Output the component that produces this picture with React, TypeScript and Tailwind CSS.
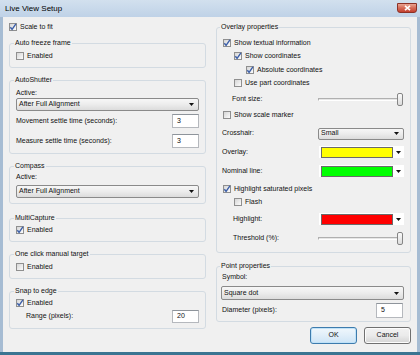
import React from 'react';

const Check = ({ checked }: { checked?: boolean }) => (
  <span className="w-[8px] h-[8px] shrink-0 border border-[#8f8f8f] bg-linear-to-br from-[#d6d6d6] to-[#fcfcfc] flex items-center justify-center">
    {checked && (
      <svg width="8" height="8" viewBox="0 0 8 8" className="overflow-visible">
        <path d="M1.3 4.2 L3.1 6.3 L6.9 0.9" fill="none" stroke="#3b5ea8" strokeWidth="1.4" />
      </svg>
    )}
  </span>
);

const CheckRow = ({ label, checked, className = '' }: { label: string; checked?: boolean; className?: string }) => (
  <div className={`flex items-center h-[12px] gap-[3px] ${className}`}>
    <Check checked={checked} />
    <span>{label}</span>
  </div>
);

const Arrow = () => (
  <svg width="5" height="3" viewBox="0 0 5 3" className="shrink-0">
    <polygon points="0,0 5,0 2.5,3" fill="#111" />
  </svg>
);

const Combo = ({ text, className = '' }: { text: string; className?: string }) => (
  <div
    className={`flex items-center justify-between border border-[#8a8a8a] rounded-[2px] bg-linear-to-b from-[#f7f7f7] via-[#ececec] to-[#dcdcdc] pl-[2px] pr-[4px] ${className}`}
  >
    <span>{text}</span>
    <Arrow />
  </div>
);

const ColorCombo = ({ color }: { color: string }) => (
  <div className="flex items-center w-[85px] h-[12px] bg-white pl-[2px] pr-[3px]">
    <div className={`w-[72px] h-[11px] border border-[#6a6a6a] ${color}`} />
    <div className="flex-1 flex justify-end">
      <Arrow />
    </div>
  </div>
);

const NumBox = ({ value, className = '' }: { value: string; className?: string }) => (
  <div
    className={`w-[27px] bg-white border border-[#b5b8bd] border-t-[#8e949b] flex items-center pl-[4px] ${className}`}
  >
    {value}
  </div>
);

const Slider = () => (
  <div className="flex items-center w-[85px] h-[14px]">
    <div className="flex-1 h-[3px] border border-[#b0b0b0] border-b-white bg-[#e6e6e6]" />
    <div className="w-[6px] h-[13px] -ml-[1px] rounded-[2px] border border-[#858585] bg-linear-to-b from-[#fafafa] to-[#dcdcdc]" />
  </div>
);

const Group = ({ title, className = '', children }: { title: string; className?: string; children: React.ReactNode }) => (
  <fieldset className={`border border-[#d3dbe2] rounded-[3px] ${className}`}>
    <legend className="-ml-[2px] px-[1px] leading-[10px]">{title}</legend>
    {children}
  </fieldset>
);

export default function App() {
  return (
    <div className="w-[420px] h-[355px] flex flex-col bg-[#a6bcd3] text-[7px] text-[#111] font-['Liberation_Sans',Arial,sans-serif] overflow-hidden">
      {/* Title bar */}
      <div className="h-[17px] shrink-0 flex items-start justify-between pl-[5px] pr-[3px] bg-linear-to-b from-[#d2e0ee] to-[#bfd2e7]">
        <span className="text-[8px] leading-[17px] text-black">Live View Setup</span>
        <div className="mt-[3px] w-[20px] h-[10px] rounded-b-[3px] border border-[#8c3126] bg-linear-to-b from-[#e9a493] via-[#d56a57] to-[#c33f2f] flex items-center justify-center">
          <svg width="7" height="6" viewBox="0 0 7 6">
            <path d="M1 0.8 L6 5.2 M6 0.8 L1 5.2" stroke="#fff" strokeWidth="1.6" />
          </svg>
        </div>
      </div>

      {/* Client area */}
      <div className="h-[335px] mx-[3px] bg-[#f0f0f0] flex gap-[10px] px-[6px]">
        {/* Left column */}
        <div className="w-[197px] flex flex-col">
          <CheckRow label="Scale to fit" checked className="mt-[4px]" />

          <Group title="Auto freeze frame" className="mt-[5px] px-[6px] pb-[5px]">
            <CheckRow label="Enabled" className="mt-[2px]" />
          </Group>

          <Group title="AutoShutter" className="mt-[7px] px-[6px] pb-[5px]">
            <div className="h-[10px] mt-[3px] flex items-center">Active:</div>
            <Combo text="After Full Alignment" className="h-[13px]" />
            <div className="h-[14px] mt-[3px] flex items-center justify-between">
              <span>Movement settle time (seconds):</span>
              <NumBox value="3" className="h-[14px]" />
            </div>
            <div className="h-[14px] mt-[6px] flex items-center justify-between">
              <span>Measure settle time (seconds):</span>
              <NumBox value="3" className="h-[14px]" />
            </div>
          </Group>

          <Group title="Compass" className="mt-[7px] px-[6px] pb-[5px]">
            <div className="h-[10px] mt-[1px] flex items-center">Active:</div>
            <Combo text="After Full Alignment" className="h-[13px] mt-[3px]" />
          </Group>

          <Group title="MultiCapture" className="mt-[9px] px-[6px] pb-[5px]">
            <CheckRow label="Enabled" checked className="mt-[1px]" />
          </Group>

          <Group title="One click manual target" className="mt-[7px] px-[6px] pb-[5px]">
            <CheckRow label="Enabled" className="mt-[2px]" />
          </Group>

          <Group title="Snap to edge" className="mt-[7px] px-[6px] pb-[5px]">
            <CheckRow label="Enabled" checked className="mt-[1px]" />
            <div className="h-[13px] mt-[1px] flex items-center justify-between pl-[10px]">
              <span>Range (pixels):</span>
              <NumBox value="20" className="h-[13px]" />
            </div>
          </Group>
        </div>

        {/* Right column */}
        <div className="w-[195px] flex flex-col">
          <Group title="Overlay properties" className="mt-[5px] pl-[5px] pr-[6px] pb-[7px]">
            <CheckRow label="Show textual information" checked className="mt-[5px] pl-[1px]" />
            <CheckRow label="Show coordinates" checked className="mt-[1px] pl-[12px]" />
            <CheckRow label="Absolute coordinates" checked className="mt-[2px] pl-[24px]" />
            <CheckRow label="Use part coordinates" className="mt-[1px] pl-[12px]" />
            <div className="h-[14px] mt-[3px] flex items-center justify-between pl-[10px] pr-[1px]">
              <span>Font size:</span>
              <Slider />
            </div>
            <CheckRow label="Show scale marker" className="mt-[3px] pl-[1px]" />
            <div className="h-[13px] mt-[6px] flex items-center justify-between">
              <span>Crosshair:</span>
              <Combo text="Small" className="w-[86px] h-[12px]" />
            </div>
            <div className="h-[12px] mt-[6px] flex items-center justify-between">
              <span>Overlay:</span>
              <ColorCombo color="bg-[#ffff00]" />
            </div>
            <div className="h-[12px] mt-[7px] flex items-center justify-between">
              <span>Nominal line:</span>
              <ColorCombo color="bg-[#00ff00]" />
            </div>
            <CheckRow label="Highlight saturated pixels" checked className="mt-[6px] pl-[1px]" />
            <CheckRow label="Flash" className="mt-[1px] pl-[12px]" />
            <div className="h-[12px] mt-[5px] flex items-center justify-between pl-[11px]">
              <span>Highlight:</span>
              <ColorCombo color="bg-[#ff0000]" />
            </div>
            <div className="h-[14px] mt-[6px] flex items-center justify-between pl-[11px] pr-[1px]">
              <span>Threshold (%):</span>
              <Slider />
            </div>
          </Group>

          <Group title="Point properties" className="mt-[8px] pl-[5px] pr-[6px] pb-[3px]">
            <div className="h-[10px] mt-[1px] flex items-center">Symbol:</div>
            <Combo text="Square dot" className="h-[14px] mt-[4px] -ml-[1px]" />
            <div className="h-[15px] mt-[3px] flex items-center justify-between pr-[1px]">
              <span>Diameter (pixels):</span>
              <NumBox value="5" className="h-[15px]" />
            </div>
          </Group>

          <div className="mt-[5px] flex justify-end gap-[7px]">
            <button className="w-[47px] h-[17px] rounded-[3px] border border-[#3d7bad] bg-linear-to-b from-[#f0f7fc] via-[#e0eef9] to-[#cde4f6] shadow-[inset_0_0_0_1px_#bfe2f8] text-[7px]">
              OK
            </button>
            <button className="w-[47px] h-[17px] rounded-[3px] border border-[#707070] bg-linear-to-b from-[#f2f2f2] via-[#ebebeb] to-[#d4d4d4] shadow-[inset_0_0_0_1px_#fcfcfc] text-[7px]">
              Cancel
            </button>
          </div>
        </div>
      </div>

      <div className="h-[3px] shrink-0 bg-[#3b7592]" />
    </div>
  );
}
